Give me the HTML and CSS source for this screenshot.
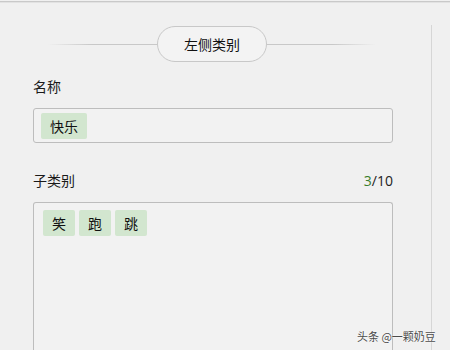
FILE: index.html
```html
<!DOCTYPE html>
<html lang="zh">
<head>
<meta charset="utf-8">
<link rel="stylesheet" href="styles.css">
</head>
<body>
<div class="topline"></div>
<div class="layout">
  <div class="panel">
    <div class="heading">
      <span class="rule rule-left"></span>
      <span class="pill">左侧类别</span>
      <span class="rule rule-right"></span>
    </div>
    <div class="label-row"><span class="label">名称</span></div>
    <div class="input-box">
      <span class="tag">快乐</span>
    </div>
    <div class="label-row label-row-sub">
      <span class="label">子类别</span>
      <span class="count"><span class="count-num">3</span>/10</span>
    </div>
    <div class="textarea-box">
      <span class="tag tag-single">笑</span>
      <span class="tag tag-single">跑</span>
      <span class="tag tag-single">跳</span>
    </div>
  </div>
</div>
<div class="watermark">头条 @一颗奶豆</div>
</body>
</html>
```

FILE: styles.css
```css
html, body {
  margin: 0;
  padding: 0;
  width: 450px;
  height: 350px;
  overflow: hidden;
  background: #f0f0f0;
  font-family: "Noto Sans CJK SC", "Liberation Sans", sans-serif;
  color: #1a1a1a;
}

body {
  position: relative;
}

.topline {
  height: 1px;
  margin-top: 1px;
  background: #c9c9c9;
  box-shadow: 0 1px 0 #e2e2e2;
}

.layout {
  display: flex;
  padding-top: 23px;
}

.panel {
  width: 432px;
  border-right: 1px solid #d6d6d6;
  box-sizing: border-box;
  padding: 1px 38px 0 33px;
  height: 340px;
}

.heading {
  display: flex;
  align-items: center;
  height: 36px;
}

.rule {
  flex: 1;
  height: 1px;
}

.rule-left {
  margin-left: 15px;
  background: linear-gradient(to right, rgba(200,200,200,0), #c8c8c8 40%);
}

.rule-right {
  margin-right: 17px;
  background: linear-gradient(to left, rgba(200,200,200,0), #c8c8c8 40%);
}

.pill {
  width: 110px;
  height: 36px;
  box-sizing: border-box;
  border: 1px solid #c8c8c8;
  border-radius: 18px;
  background: #f3f3f3;
  display: flex;
  align-items: center;
  justify-content: center;
  font-size: 14px;
  color: #111;
}

.label-row {
  display: flex;
  justify-content: space-between;
  align-items: center;
  height: 20px;
  margin-top: 14px;
  margin-bottom: 12px;
  font-size: 14px;
}

.label-row-sub {
  margin-top: 27px;
}

.count {
  font-family: "Open Sans", "Liberation Sans", sans-serif;
  font-size: 14px;
  color: #222;
}

.count-num {
  color: #3a7d2c;
}

.input-box {
  height: 35px;
  box-sizing: border-box;
  border: 1px solid #bdbdbd;
  border-radius: 3px;
  background: #f2f2f2;
  padding: 4px 7px;
  display: flex;
  gap: 4px;
  align-items: flex-start;
}

.textarea-box {
  height: 160px;
  box-sizing: border-box;
  border: 1px solid #bdbdbd;
  border-bottom: none;
  border-radius: 3px 3px 0 0;
  background: #f2f2f2;
  padding: 7px 9px;
  display: flex;
  gap: 4px;
  align-items: flex-start;
}

.tag {
  height: 26px;
  padding: 0 9px;
  background: #d2e6cf;
  border-radius: 2px;
  display: flex;
  align-items: center;
  font-size: 14px;
  color: #111;
}

.tag-single {
  width: 32px;
  padding: 0;
  justify-content: center;
  box-sizing: border-box;
}

.watermark {
  position: absolute;
  left: 357px;
  top: 328px;
  font-size: 11px;
  color: #4a4a4a;
  text-shadow: 0 0 2px #fff, 0 0 1px #fff;
  white-space: nowrap;
}
```
